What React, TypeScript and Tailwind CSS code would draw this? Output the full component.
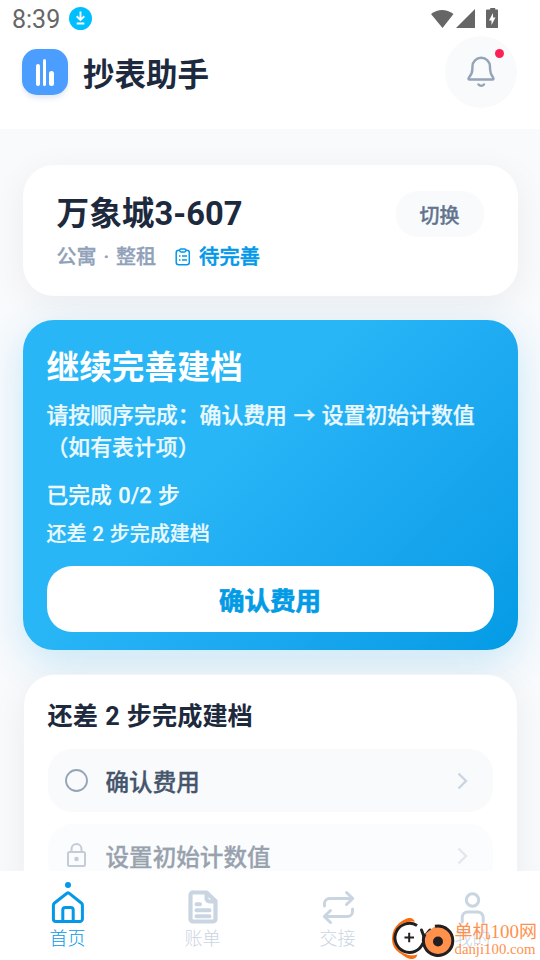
import type { ReactNode } from 'react';

function StatusBar() {
    return (
        <div className="flex h-9 items-center justify-between pl-3 pr-[42px] text-[#666]">
            <div className="flex items-center gap-[9px]">
                <span className="text-[25px] leading-none pt-[3px]">8:39</span>
                <svg width="23" height="23" viewBox="0 0 23 23">
                    <circle cx="11.5" cy="11.5" r="11.5" fill="#00bfff" />
                    <path d="M11.500 4.500v8M7.700 9.300l3.800 3.700 3.800-3.700M7.700 16.500h7.600" fill="none" stroke="#fff" strokeWidth="1.900" />
                </svg>
            </div>
            <svg width="68" height="22" viewBox="0 0 68 22" fill="#666" className="mt-px">
                <path d="M1 6Q12-2 23.500 6L12.500 20z" />
                <path d="M45 1v19H26z" />
                <path d="M57.200 1.500h3V0h5v1.500h2.200q.8 0 .8.800v17q0 .700-.8.700H57q-1 0-1-.7v-17q0-.8 1.200-.8z" />
                <path d="m63 5-4 7.500h2.500V17l4-7.500H63z" fill="#fff" />
            </svg>
        </div>
    );
}

function Header() {
    return (
        <header className="h-[129px] shrink-0 bg-white">
            <StatusBar />
            <div className="flex h-[72px] items-center justify-between pl-[22px] pr-[23px]">
                <div className="flex items-center gap-[15px]">
                    <div className="flex size-[46px] items-end justify-center gap-[3px] rounded-[15px] bg-[#4b9eff] pb-[9px] shadow-md shadow-slate-200">
                        <span className="h-[22px] w-1 rounded-full bg-white" />
                        <span className="h-[27px] w-[3px] rounded-full bg-white" />
                        <span className="h-[15px] w-[5px] rounded-full bg-white" />
                    </div>
                    <h1 className="pt-2 text-[31.500px] font-bold leading-none text-slate-800">抄表助手</h1>
                </div>
                <button className="relative flex size-[72px] items-center justify-center rounded-full bg-slate-50">
                    <svg width="30" height="34" viewBox="0 0 30 34" fill="none" stroke="#94a3b8" strokeWidth="2.400" strokeLinecap="round" strokeLinejoin="round">
                        <path d="M3.500 24.500h23c1 0 1.200-.8.8-1.500C25.500 20.500 24 18 24 14v-2.500a8.800 8.800 0 0 0-17.600 0V14c0 4-1.500 6.500-3.700 9-.5.700-.2 1.500.8 1.500z" />
                        <path d="M12.500 29.500c1.500 1.700 4 1.700 5.500 0" />
                    </svg>
                    <span className="absolute left-[50px] top-[13px] size-[9px] rounded-full bg-[#ff1f57]" />
                </button>
            </div>
        </header>
    );
}

function UnitCard() {
    return (
        <section className="flex h-[131px] shrink-0 items-start justify-between rounded-[31px] bg-white pl-[34px] pr-[34px] pt-[26px] shadow-[0_8px_36px_rgba(15,23,42,0.06)]">
            <div>
                <h2 className="text-[32.700px] font-bold leading-[46px] text-slate-800">万象城3-607</h2>
                <div className="mt-[6px] flex items-center text-[20px] font-medium leading-7 text-slate-400 [-webkit-text-stroke:0.3px]">
                    <span className="[word-spacing:2px]">公寓 · 整租</span>
                    <svg className="ml-[19px] mr-2" width="16" height="18" viewBox="0 0 16 18" fill="none" stroke="#0398e8" strokeWidth="1.500">
                        <rect x="1.200" y="2.200" width="13.100" height="14.600" rx="2.500" />
                        <rect x="4.700" y="0.900" width="6.200" height="3" rx="1.300" fill="#fff" />
                        <path d="M4 8h1.500M7 8h5M4 12h1.500M7 12h5" />
                    </svg>
                    <span className="text-[20.300px] text-[#0398e8] [-webkit-text-stroke:0.5px]">待完善</span>
                </div>
            </div>
            <button className="h-[46px] w-[88px] rounded-[22px] bg-slate-50 pt-[3px] text-[20px] font-medium text-slate-500 [-webkit-text-stroke:0.3px]">切换</button>
        </section>
    );
}

function ProgressCard() {
    return (
        <section className="mt-6 h-[330px] shrink-0 rounded-[31px] bg-linear-135 from-[#29b6f6] from-40% via-[#1eabf2] via-60% to-[#039be5] px-6 pt-6 text-white shadow-[0_12px_40px_rgba(3,155,229,0.2)] [word-spacing:1px]">
            <h2 className="text-[32.700px] font-bold leading-[48px]">继续完善建档</h2>
            <p className="mt-2 text-[21.870px] font-medium leading-8 text-white/90 [-webkit-text-stroke:0.25px]">
                请按顺序完成：确认费用 → 设置初始计数值
                <br />
                （如有表计项）
            </p>
            <p className="mt-4 text-[21.800px] font-medium leading-8 text-white/95 [-webkit-text-stroke:0.25px]">已完成 0/2 步</p>
            <p className="mt-[7px] text-[20px] font-medium leading-[30px] text-white/90 [-webkit-text-stroke:0.2px]">还差 2 步完成建档</p>
            <button className="mt-[17px] h-[66px] w-full rounded-[25px] bg-white pt-[4px] text-[25.500px] font-bold text-[#039be5] [-webkit-text-stroke:0.7px]">确认费用</button>
        </section>
    );
}

function Step({ icon, label, locked }: { icon: ReactNode; label: string; locked?: boolean }) {
    return (
        <div className={`flex h-[63px] items-center rounded-[24px] bg-slate-50 pl-[17px] pr-[24px] ${locked ? 'opacity-55' : ''}`}>
            {icon}
            <span className="ml-[17px] flex-1 pt-1.5 text-[23.600px] font-medium text-slate-600 [-webkit-text-stroke:0.3px]">{label}</span>
            <svg width="12" height="18" viewBox="0 0 12 18" fill="none" stroke="#cbd5e1" strokeWidth="2.400">
                <path d="M1.500 1.500 9 9l-7.500 7.500" />
            </svg>
        </div>
    );
}

function StepsCard() {
    return (
        <section className="mt-6 h-[260px] shrink-0 rounded-[31px] border border-slate-100 bg-white px-6 pt-[22px] shadow-[0_8px_36px_rgba(15,23,42,0.06)]">
            <h3 className="text-[25.200px] font-bold leading-10 text-slate-800 [word-spacing:1px]">还差 2 步完成建档</h3>
            <div className="mt-[12px] flex flex-col gap-3">
                <Step
                    label="确认费用"
                    icon={
                        <svg width="24" height="24" viewBox="0 0 24 24" fill="none" stroke="#94a3b8" strokeWidth="1.800">
                            <circle cx="11.500" cy="11.500" r="10.500" />
                        </svg>
                    }
                />
                <Step
                    label="设置初始计数值"
                    locked
                    icon={
                        <svg width="24" height="26" viewBox="0 0 24 26" fill="none" stroke="#94a3b8" strokeWidth="2">
                            <rect x="3" y="9" width="17" height="14" rx="1.500" />
                            <path d="M6.500 9V6a5 5 0 0 1 10 0v3" />
                            <circle cx="11.500" cy="16" r="1.200" fill="#94a3b8" />
                        </svg>
                    }
                />
            </div>
        </section>
    );
}

function Tab({ label, active, children }: { label: string; active?: boolean; children: ReactNode }) {
    return (
        <div className={`relative flex flex-1 flex-col items-center pt-[18px] ${active ? 'text-[#0398e8]' : 'text-slate-300'}`}>
            {active && <span className="absolute top-[11px] size-[6px] rounded-full bg-[#0398e8]" />}
            <svg width="36" height="36" viewBox="0 0 36 36" fill="none" stroke="currentColor" strokeWidth="3" strokeLinecap="round" strokeLinejoin="round">
                {children}
            </svg>
            <span className="pt-px text-[18px] font-light leading-[26px]">{label}</span>
        </div>
    );
}

function TabBar() {
    return (
        <nav className="relative flex h-[89px] shrink-0 bg-white">
            <Tab label="首页" active>
                <path d="M17 4.200 4.500 14c-.7.600-1.100 1.300-1.100 2.200V30a2.500 2.500 0 0 0 2.500 2.500h24a2.500 2.500 0 0 0 2.500-2.500V16.200c0-.9-.4-1.600-1.100-2.200L19 4.200c-.7-.5-1.300-.5-2 0z" />
                <path d="M12.800 32V21a2.500 2.500 0 0 1 2.500-2.500h5.400a2.500 2.500 0 0 1 2.500 2.500v11" />
            </Tab>
            <Tab label="账单">
                <path d="M8.500 3.500h13l9 8.500v18a2.500 2.500 0 0 1-2.500 2.500H8A2.500 2.500 0 0 1 5.500 30V6a2.500 2.500 0 0 1 3-2.500z" strokeWidth="4.200" />
                <path d="M21.500 4v5.500a3 3 0 0 0 3 3H30" strokeWidth="4" />
                <path d="M11.500 15.200h3.500M11.500 21.200h13M11.500 27.200h13" strokeWidth="4" />
            </Tab>
            <Tab label="交接">
                <path d="m26.500 3.500 6.200 6-6.200 6M4.500 17v-2.500a5 5 0 0 1 5-5h22.500M10.500 33.500l-6.200-6 6.200-6M32.500 20v2.500a5 5 0 0 1-5 5H5" />
            </Tab>
            <Tab label="我的">
                <circle cx="17.500" cy="11" r="6.200" />
                <path d="M7.200 33v-4.500a5.500 5.500 0 0 1 5.500-5.500h10a5.500 5.500 0 0 1 5.500 5.500V33" />
            </Tab>
            <Watermark />
        </nav>
    );
}

function Watermark() {
    return (
        <div className="absolute bottom-0 right-[3px] flex items-center">
            <svg width="65" height="44" viewBox="0 0 65 44" fill="none">
                <path d="M22 3.500C15 3 3 9 3 23c0 11 10 17 22 18" stroke="#ff6c0a" strokeWidth="2" />
                <path d="M8 9.500c3-4 6.500-6.500 10.500-7.500 3-.5 5 1 6.500 3.500-6-.5-12 1-17 4zM11 37c5 2.500 11 3.500 16.500 1.500-1 3.500-3.500 5-7 4.500-3.500-.500-7-3-9.500-6z" fill="#ff6c0a" />
                <path d="M27 9.500A14.500 14.500 0 1 0 33 27" fill="#fff" stroke="#231f20" strokeWidth="3" />
                <path d="M14.500 21.500h9.500M19.200 16.700v9.600" stroke="#231f20" strokeWidth="2" />
                <path d="m31.500 14 3 8M35 20l5-6" stroke="#231f20" strokeWidth="3" strokeLinecap="round" />
                <path d="M45 10.300A14.700 14.700 0 1 1 35 18" fill="#ff914d" stroke="#231f20" strokeWidth="3" />
                <circle cx="48" cy="25.500" r="5" fill="#231f20" />
            </svg>
            <div className="flex flex-col font-['Liberation_Serif','Noto_Sans_CJK_SC',serif] text-[#ff914d]">
                <span className="h-[22px] text-[18px] leading-[25px]">单机<span className="text-[19px]">100</span>网</span>
                <span className="text-[14.800px] leading-[16px]">danji100.com</span>
            </div>
        </div>
    );
}

export default function App() {
    return (
        <div lang="zh-CN" className="flex h-[960px] w-[540px] flex-col overflow-hidden bg-slate-50 font-[Roboto,'Noto_Sans_CJK_SC',sans-serif]">
            <Header />
            <main className="flex min-h-0 flex-1 flex-col overflow-hidden px-[22.500px] pt-9">
                <UnitCard />
                <ProgressCard />
                <StepsCard />
            </main>
            <TabBar />
        </div>
    );
}
